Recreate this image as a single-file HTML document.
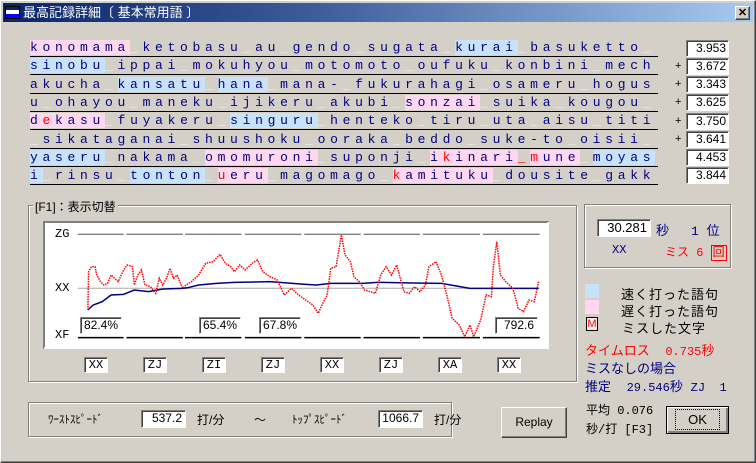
<!DOCTYPE html>
<html><head><meta charset="utf-8"><style>
*{margin:0;padding:0;box-sizing:border-box}
body{width:756px;height:463px;background:#d4d0c8;position:relative;overflow:hidden;font-family:"Liberation Sans","Noto Sans CJK JP",sans-serif;font-size:12px}
.a{position:absolute}
#win{left:0;top:0;width:756px;height:463px;border:1px solid #fff;border-right-color:#404040;border-bottom-color:#404040;box-shadow:inset -1px -1px 0 #808080}
#tb{left:3px;top:3px;width:750px;height:19px;background:linear-gradient(90deg,#0a246a,#3a5a98 40%,#a6caf0);color:#fff;font-size:13px;line-height:19px;padding-left:20px;font-family:"Liberation Sans","Noto Sans CJK JP",sans-serif}
.row{left:30px;width:628px;height:18px;border-bottom:1.5px solid #000;font-family:"Liberation Mono","Noto Sans CJK JP",monospace;font-size:13px;letter-spacing:4.7px;color:#000080;line-height:17px;white-space:pre}
.row b{font-weight:normal}
.p{background:#ffd8f0}.bl{background:#c8e2fa}
.row i{font-style:normal;color:#eeeeee}
.row em{font-style:normal;color:#f00}
.row i.r{color:#f00}
.num{left:686px;width:43px;height:17px;background:#fff;border:1px solid #808080;border-right-color:#fff;border-bottom-color:#fff;box-shadow:inset 1px 1px 0 #404040;text-align:right;font-family:"Liberation Sans",sans-serif;font-size:12px;line-height:15px;padding-right:2px}
.plus{left:675px;font-size:11px}
.grp{border:1px solid #808080;box-shadow:1px 1px 0 #fff,inset 1px 1px 0 #fff}
.sunk{background:#fff;border:1px solid #808080;border-right-color:#fff;border-bottom-color:#fff;box-shadow:inset 1px 1px 0 #404040;text-align:center;font-family:"Liberation Mono",monospace;font-size:12px;line-height:14px}
.pct{background:#fff;border:1px solid #fff;border-top-color:#808080;border-left-color:#808080;box-shadow:inset 1px 1px 0 #404040;text-align:right;padding-right:3px;font-size:12px;line-height:14px;height:17px}
.btn{background:#d4d0c8;border:1px solid #fff;border-right-color:#404040;border-bottom-color:#404040;box-shadow:inset -1px -1px 0 #808080;text-align:center}
.nv{color:#000080}.rd{color:#f00}
.mono{font-family:"Liberation Mono","Noto Sans CJK JP",monospace}
</style></head><body>
<div id="win" class="a"></div>
<div id="tb" class="a">最高記録詳細〔 基本常用語 〕</div>
<svg class="a" style="left:5px;top:6px" width="15" height="13"><rect x="0.5" y="0.5" width="14" height="12" fill="#fff" stroke="#000"/><rect x="1" y="1" width="13" height="3" fill="#0a246a"/><rect x="1" y="8" width="13" height="4" fill="#0000ff"/></svg>
<div class="a btn" style="left:735px;top:6px;width:15px;height:14px;font-size:11px;line-height:12px;font-weight:bold">✕</div>

<div class="a row" style="top:39px"><b class="p">konomama</b><i>_</i>ketobasu<i>_</i>au<i>_</i>gendo<i>_</i>sugata<i>_</i><b class="bl">kurai</b><i>_</i>basuketto<i>_</i></div>
<div class="a row" style="top:57.3px"><b class="bl">sinobu</b><i>_</i>ippai<i>_</i>mokuhyou<i>_</i>motomoto<i>_</i>oufuku<i>_</i>konbini<i>_</i>mech</div>
<div class="a row" style="top:75.6px">akucha<i>_</i><b class="bl">kansatu</b><i>_</i><b class="bl">hana</b><i>_</i>mana-<i>_</i>fukurahagi<i>_</i>osameru<i>_</i>hogus</div>
<div class="a row" style="top:93.9px">u<i>_</i>ohayou<i>_</i>maneku<i>_</i>ijikeru<i>_</i>akubi<i>_</i><b class="p">sonzai</b><i>_</i>suika<i>_</i>kougou<i>_</i></div>
<div class="a row" style="top:112.2px"><b class="p">d<em>e</em>kasu</b><i>_</i>fuyakeru<i>_</i><b class="bl">singuru</b><i>_</i>henteko<i>_</i>tiru<i>_</i>uta<i>_</i>aisu<i>_</i>titi</div>
<div class="a row" style="top:130.5px"><i>_</i>sikataganai<i>_</i>shuushoku<i>_</i>ooraka<i>_</i>beddo<i>_</i>suke-to<i>_</i>oisii<i>_</i></div>
<div class="a row" style="top:148.8px"><b class="bl">yaseru</b><i>_</i>nakama<i>_</i><b class="p">omomuroni</b><i>_</i>suponji<i>_</i><b class="p">i<em>k</em>inari</b><i class="r">_</i><b class="p"><em>m</em>une</b><i>_</i><b class="bl">moyas</b></div>
<div class="a row" style="top:167.1px"><b class="bl">i</b><i>_</i>rinsu<i>_</i><b class="bl">tonton</b><i>_</i><b class="p"><em>u</em>eru</b><i>_</i>magomago<i>_</i><b class="p"><em>k</em>amituku</b><i>_</i>dousite<i>_</i>gakk</div>

<div class="a num" style="top:40px">3.953</div>
<div class="a num" style="top:58px">3.672</div><div class="a plus" style="top:60px">+</div>
<div class="a num" style="top:76px">3.343</div><div class="a plus" style="top:78px">+</div>
<div class="a num" style="top:94px">3.625</div><div class="a plus" style="top:96px">+</div>
<div class="a num" style="top:113px">3.750</div><div class="a plus" style="top:115px">+</div>
<div class="a num" style="top:131px">3.641</div><div class="a plus" style="top:133px">+</div>
<div class="a num" style="top:149px">4.453</div>
<div class="a num" style="top:167px">3.844</div>

<div class="a grp" style="left:28px;top:205px;width:549px;height:177px"></div>
<div class="a" style="left:33px;top:198px;background:#d4d0c8;padding:0 2px;font-size:12px">[F1]：表示切替</div>
<div class="a" style="left:43px;top:221px;width:506px;height:128px;background:#fff;border:2px solid #808080;border-right-color:#fff;border-bottom-color:#fff;box-shadow:0 0 0 1px #d4d0c8"></div>
<div class="a" style="left:43px;top:221px;width:506px;height:128px;border-top:1px solid #808080;border-left:1px solid #808080"></div>
<svg class="a" style="left:20px;top:195px" width="560" height="180" viewBox="0 0 1568 540" preserveAspectRatio="none">
<g stroke-width="1.3" vector-effect="non-scaling-stroke">
<path d="M162 118H290M298 118H456M462 118H620M630 118H788M796 118H954M962 118H1120M1128 118H1288M1296 118H1455" stroke="#808080" vector-effect="non-scaling-stroke" stroke-width="1.3"/>
<path d="M162 280H1455" stroke="#c0c0c0" vector-effect="non-scaling-stroke" stroke-width="1.3"/>
<path d="M162 428H290M298 428H456M462 428H620M630 428H788M796 428H954M962 428H1120M1128 428H1288M1296 428H1455" stroke="#000" vector-effect="non-scaling-stroke" stroke-width="1.5"/>
</g>
<polyline fill="none" stroke="#000080" stroke-width="1.5" vector-effect="non-scaling-stroke" points="190,345 205,330 230,320 255,300 290,298 320,285 360,290 400,282 455,280 470,278 500,270 550,265 600,262 700,260 800,268 830,270 870,265 960,265 1000,262 1100,264 1180,265 1260,280 1452,280"/>
<polyline fill="none" stroke="#f00" stroke-width="1.5" stroke-dasharray="1.5 1" vector-effect="non-scaling-stroke" points="190,345 192,230 200,215 210,215 215,240 225,260 235,270 245,265 255,240 265,250 275,260 290,225 300,210 315,215 320,270 330,240 340,225 350,270 365,275 380,295 390,250 400,270 410,250 420,220 430,250 440,240 455,280 465,270 480,260 500,240 520,205 540,200 560,178 575,205 590,215 600,230 615,210 630,225 650,205 665,195 680,230 700,245 720,255 740,300 760,280 780,300 800,315 820,330 835,355 850,320 860,300 870,220 885,215 900,120 910,180 925,200 935,245 950,260 965,285 980,290 995,295 1010,240 1025,215 1040,240 1055,210 1065,250 1075,290 1090,295 1105,275 1120,290 1135,270 1145,215 1165,200 1180,240 1195,300 1210,370 1230,390 1245,425 1260,390 1270,425 1290,375 1305,300 1320,305 1325,220 1335,140 1345,240 1360,260 1380,280 1395,340 1410,350 1425,315 1440,320 1452,260"/>
</svg>
<div class="a mono" style="left:55px;top:227px">ZG</div>
<div class="a mono" style="left:55px;top:281px">XX</div>
<div class="a mono" style="left:55px;top:328px">XF</div>
<div class="a pct" style="left:80px;top:317px;width:42px">82.4%</div>
<div class="a pct" style="left:199px;top:317px;width:42px">65.4%</div>
<div class="a pct" style="left:259px;top:317px;width:42px">67.8%</div>
<div class="a pct" style="left:495px;top:317px;width:43px">792.6</div>
<div class="a sunk" style="left:84px;top:357px;width:24px;height:16px">XX</div>
<div class="a sunk" style="left:143px;top:357px;width:24px;height:16px">ZJ</div>
<div class="a sunk" style="left:202px;top:357px;width:24px;height:16px">ZI</div>
<div class="a sunk" style="left:261px;top:357px;width:24px;height:16px">ZJ</div>
<div class="a sunk" style="left:320px;top:357px;width:24px;height:16px">XX</div>
<div class="a sunk" style="left:379px;top:357px;width:24px;height:16px">ZJ</div>
<div class="a sunk" style="left:438px;top:357px;width:24px;height:16px">XA</div>
<div class="a sunk" style="left:497px;top:357px;width:24px;height:16px">XX</div>

<div class="a grp" style="left:28px;top:402px;width:424px;height:35px"></div>
<div class="a" style="left:48px;top:411px;font-size:11px">ﾜｰｽﾄｽﾋﾟｰﾄﾞ</div>
<div class="a pct" style="left:141px;top:410px;width:45px;height:18px;line-height:15px">537.2</div>
<div class="a" style="left:197px;top:411px">打/分</div>
<div class="a" style="left:254px;top:411px">～</div>
<div class="a" style="left:292px;top:411px;font-size:11px">ﾄｯﾌﾟｽﾋﾟｰﾄﾞ</div>
<div class="a pct" style="left:378px;top:410px;width:45px;height:18px;line-height:15px">1066.7</div>
<div class="a" style="left:434px;top:411px">打/分</div>
<div class="a btn" style="left:501px;top:407px;width:66px;height:31px;line-height:28px">Replay</div>

<div class="a" style="left:584px;top:204px;width:147px;height:64px;border:1px solid #808080;box-shadow:1px 1px 0 #fff,inset 1px 1px 0 #fff"></div>
<div class="a pct" style="left:597px;top:219px;width:54px;height:18px;line-height:15px;font-size:13px">30.281</div>
<div class="a nv" style="left:656px;top:220px;font-size:13px">秒</div>
<div class="a nv mono" style="left:691px;top:220px;font-size:13px">1 位</div>
<div class="a nv mono" style="left:612px;top:243px">XX</div>
<div class="a rd mono" style="left:665px;top:243px;font-size:12px">ミス 6 <span style="border:1px solid #f00;padding:0 1px">回</span></div>

<div class="a" style="left:585px;top:284px;width:14px;height:14px;background:#c8e2fa"></div>
<div class="a mono" style="left:621px;top:284px;font-size:13px;letter-spacing:1px">速く打った語句</div>
<div class="a" style="left:585px;top:300px;width:14px;height:14px;background:#ffd8f0"></div>
<div class="a mono" style="left:621px;top:301px;font-size:13px;letter-spacing:1px">遅く打った語句</div>
<div class="a rd" style="left:586px;top:317px;width:12px;height:14px;border:1px solid #000;font-size:11px;line-height:12px;text-align:center;background:#fff0f0">M</div>
<div class="a mono" style="left:622px;top:318px;font-size:13px;letter-spacing:1px">ミスした文字</div>
<div class="a rd mono" style="left:585px;top:340px;font-size:13px;white-space:pre">タイムロス  <span style="font-size:12px">0.735</span>秒</div>
<div class="a nv mono" style="left:585px;top:358px;font-size:13px">ミスなしの場合</div>
<div class="a nv mono" style="left:585px;top:376px;font-size:13px;white-space:pre">推定  <span style="font-size:12px">29.546</span>秒 <span style="font-size:12px">ZJ  1</span></div>
<div class="a mono" style="left:586px;top:401px;font-size:12px">平均 0.076</div>
<div class="a mono" style="left:586px;top:420px;font-size:12px">秒/打 [F3]</div>
<div class="a btn" style="left:666px;top:406px;width:63px;height:28px;border:1px solid #000;box-shadow:inset 1px 1px 0 #fff,inset -2px -2px 0 #808080;line-height:25px;font-size:13px"><span style="outline:1px dotted #000;padding:2px 12px">OK</span></div>
</body></html>
